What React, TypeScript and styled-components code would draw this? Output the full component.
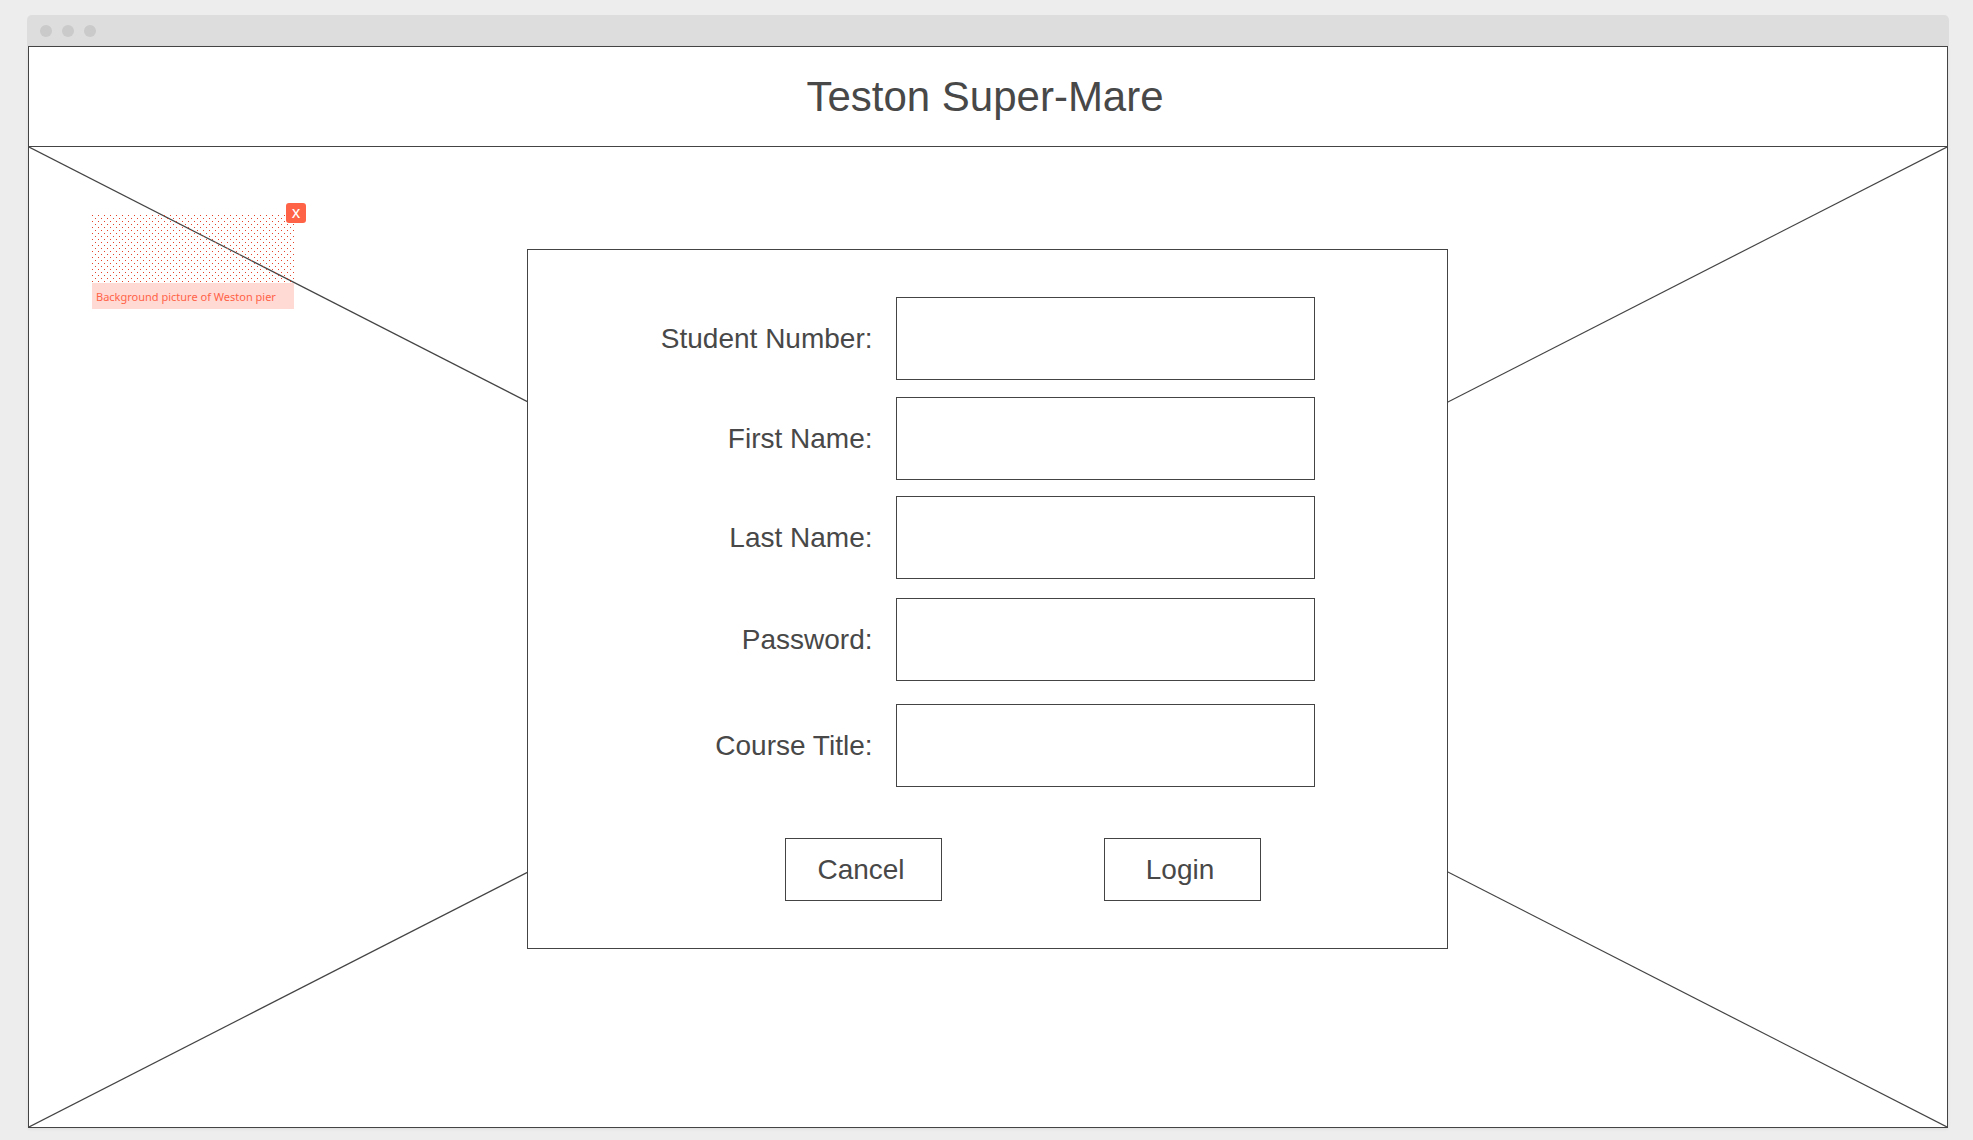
import React from "react";
import styled, { createGlobalStyle } from "styled-components";

const ink = "#444444";
const textInk = "#484848";
const accent = "#ff6347";
const dot = "#e5432a";

const GlobalStyle = createGlobalStyle`
  *, *::before, *::after { box-sizing: border-box; }
  body {
    margin: 0;
    background: #ededed;
    color: ${textInk};
    font-family: "Liberation Sans", Arial, sans-serif;
  }
`;

const Page = styled.div`
  display: flex;
  flex-direction: column;
  min-height: 100vh;
  padding: 15px 24px 12px 27px;
`;

const TitleBar = styled.div`
  display: flex;
  align-items: center;
  gap: 10px;
  height: 31px;
  padding: 0 13px;
  background: #dddddd;
  border-radius: 5px 5px 0 0;
`;

const WindowDot = styled.span`
  width: 12px;
  height: 12px;
  border-radius: 50%;
  background: #cacaca;
`;

const Frame = styled.div`
  flex: 1;
  display: flex;
  flex-direction: column;
  margin: 0 1px;
  background: #ffffff;
  border: 1px solid ${ink};
  box-shadow: 0 1px 3px rgba(0, 0, 0, 0.08);
`;

const Header = styled.header`
  display: flex;
  align-items: center;
  justify-content: center;
  height: 100px;
  padding-right: 6px;
  border-bottom: 1px solid ${ink};
`;

const Title = styled.h1`
  margin: 0;
  font-size: 42px;
  font-weight: 400;
  line-height: 48px;
`;

const Stage = styled.main`
  position: relative;
  flex: 1;
  padding: 102px 26px 178px 24px;
`;

const Cross = styled.svg`
  position: absolute;
  inset: 0;
  width: 100%;
  height: 100%;
`;

const Card = styled.form`
  position: relative;
  display: flex;
  flex-direction: column;
  max-width: 921px;
  min-height: 700px;
  margin: 0 auto;
  padding: 47px 132px 47px 24px;
  background: #ffffff;
  border: 1px solid ${ink};
`;

const Field = styled.div<{ $gap: number }>`
  display: grid;
  grid-template-columns: 1fr 419px;
  align-items: center;
  column-gap: 23px;
  margin-bottom: ${(p) => p.$gap}px;
`;

const Label = styled.label`
  font-size: 28px;
  line-height: 32px;
  text-align: right;
`;

const Input = styled.input`
  width: 100%;
  height: 83px;
  padding: 0 16px;
  background: #ffffff;
  border: 1px solid ${ink};
  border-radius: 0;
  color: ${textInk};
  font: inherit;
  font-size: 28px;
`;

const Actions = styled.div`
  display: flex;
  justify-content: flex-end;
  gap: 162px;
  padding-right: 54px;
`;

const Button = styled.button`
  width: 157px;
  height: 63px;
  padding: 0 4px 0 0;
  background: #ffffff;
  border: 1px solid ${ink};
  border-radius: 0;
  color: ${textInk};
  font: inherit;
  font-size: 28px;
  line-height: 32px;
`;

const Note = styled.aside`
  position: absolute;
  top: 68px;
  left: 63px;
  width: 202px;
`;

const NoteArea = styled.svg`
  display: block;
  width: 100%;
  height: 68px;
`;

const NoteText = styled.p`
  margin: 0;
  padding: 5px 4px 3px;
  background: #ffdad5;
  color: ${accent};
  font-family: "Noto Sans", "Open Sans", sans-serif;
  font-size: 11px;
  line-height: 18px;
  white-space: nowrap;
`;

const NoteClose = styled.button`
  position: absolute;
  top: -12px;
  right: -12px;
  width: 20px;
  height: 20px;
  padding: 0;
  background: ${accent};
  border: 0;
  border-radius: 3px;
  color: #ffffff;
  font-family: "Open Sans", "Noto Sans", sans-serif;
  font-size: 13px;
  font-weight: 600;
  line-height: 20px;
  text-align: center;
`;

const fields = [
  { id: "student-number", label: "Student Number:", type: "text", gap: 17 },
  { id: "first-name", label: "First Name:", type: "text", gap: 16 },
  { id: "last-name", label: "Last Name:", type: "text", gap: 19 },
  { id: "password", label: "Password:", type: "password", gap: 23 },
  { id: "course-title", label: "Course Title:", type: "text", gap: 51 },
];

export default function App() {
  return (
    <>
      <GlobalStyle />
      <Page>
        <TitleBar>
          <WindowDot />
          <WindowDot />
          <WindowDot />
        </TitleBar>
        <Frame>
          <Header>
            <Title>Teston Super-Mare</Title>
          </Header>
          <Stage>
            <Cross aria-hidden="true" stroke={ink} strokeWidth="1.2">
              <line x1="0" y1="0" x2="100%" y2="100%" />
              <line x1="0" y1="100%" x2="100%" y2="0" />
            </Cross>
            <Card onSubmit={(e) => e.preventDefault()}>
              {fields.map((f) => (
                <Field key={f.id} $gap={f.gap}>
                  <Label htmlFor={f.id}>{f.label}</Label>
                  <Input id={f.id} name={f.id} type={f.type} />
                </Field>
              ))}
              <Actions>
                <Button type="button">Cancel</Button>
                <Button type="submit">Login</Button>
              </Actions>
            </Card>
            <Note>
              <NoteArea aria-hidden="true" shapeRendering="crispEdges">
                <defs>
                  <pattern id="dots" width="6" height="6" patternUnits="userSpaceOnUse">
                    <rect width="1" height="1" fill={dot} />
                    <rect x="3" y="3" width="1" height="1" fill={dot} />
                  </pattern>
                </defs>
                <rect width="100%" height="100%" fill="url(#dots)" />
              </NoteArea>
              <NoteText>Background picture of Weston pier</NoteText>
              <NoteClose type="button" aria-label="X">X</NoteClose>
            </Note>
          </Stage>
        </Frame>
      </Page>
    </>
  );
}
